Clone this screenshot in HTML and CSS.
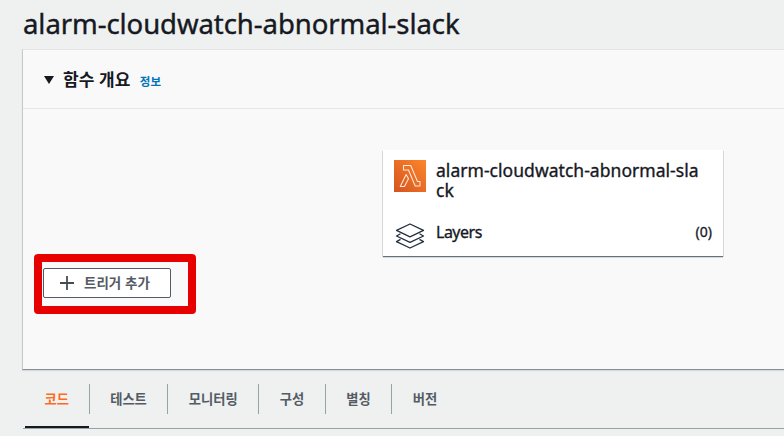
FILE: index.html
```
<!DOCTYPE html>
<html lang="ko">
<head>
<meta charset="utf-8">
<title>alarm-cloudwatch-abnormal-slack</title>
<link rel="stylesheet" href="styles.css">
</head>
<body>
<h1 class="title">alarm-cloudwatch-abnormal-slack</h1>
<section class="panel">
  <header class="panel-head">
    <svg class="caret" width="10" height="8" viewBox="0 0 10 8"><path d="M0 0h10L5 8z" fill="#16191f"/></svg>
    <h2>함수 개요</h2>
    <a class="info">정보</a>
  </header>
  <div class="panel-body">
    <div class="card">
      <div class="row name-row">
        <svg class="lambda" width="32" height="32" viewBox="0 0 32 32">
          <defs><linearGradient id="g" x1="0" y1="1" x2="1" y2="0"><stop offset="0" stop-color="#d6531f"/><stop offset="1" stop-color="#fc862b"/></linearGradient></defs>
          <path d="M0 0h32v32H0z" fill="url(#g)"/>
          <path d="M9.500 5.500h7.200l6.800 16h2.500v4.500h-4.800L14.500 10H9.500zM12.100 14.500l2.400 4.300-4.100 7.700H6.300z" fill="none" stroke="#ffe9d9" stroke-width="1.050" stroke-linejoin="round"/>
        </svg>
        <div class="name"><div>alarm-cloudwatch-abnormal-sla</div><div>ck</div></div>
      </div>
      <div class="row layers-row">
        <svg class="stack" width="30" height="26" viewBox="0 0 30 26" fill="none" stroke="#232f3e" stroke-width="1.300" stroke-linejoin="round">
          <path d="M15 1l13.500 6.400L15 13.800 1.500 7.400z"/>
          <path d="M5.500 10.800L1.500 13 15 19.400 28.500 13l-4-2.200M5.500 16.400L1.500 18.600 15 25 28.500 18.600l-4-2.200"/>
        </svg>
        <span class="layers">Layers</span>
        <span class="count">(0)</span>
      </div>
    </div>
    <div class="highlight">
      <button class="trigger">
        <svg width="14" height="14" viewBox="0 0 14 14"><path d="M7 0v14M0 7h14" stroke="#444d56" stroke-width="1.800"/></svg>
        <span>트리거 추가</span>
      </button>
    </div>
  </div>
</section>
<nav class="tabs">
  <a class="tab active">코드</a><a class="tab">테스트</a><a class="tab">모니터링</a><a class="tab">구성</a><a class="tab">별칭</a><a class="tab">버전</a>
</nav>
</body>
</html>
```

FILE: styles.css
```
* { box-sizing: border-box; }
body {
  margin: 0;
  height: 436px;
  overflow: hidden;
  background: #eff1f1;
  color: #16191f;
  font-family: "Noto Sans", "Noto Sans CJK KR", sans-serif;
}
.title {
  margin: 0;
  height: 49px;
  padding-left: 23px;
  font-size: 27.500px;
  font-weight: 400;
  line-height: 47px;
  letter-spacing: -.07px;
  white-space: nowrap;
  -webkit-text-stroke: .4px;
}
.panel {
  width: 770px;
  height: 321px;
  margin-left: 22px;
  background: #f9f9f9;
  border: 1px solid #e3e5e5;
  border-left-color: #c3caca;
  border-bottom-color: #878f94;
  box-shadow: 0 1px 1px #d5dadb;
}
.panel-head {
  display: flex;
  height: 59px;
  padding-left: 21px;
  border-bottom: 1px solid #e5e7e7;
}
.caret { margin-top: 26px; }
h2 {
  margin: 0 0 0 9px;
  font: 700 17px/57px "Noto Sans CJK KR", sans-serif;
}
.info {
  margin-left: 9.500px;
  color: #0073bb;
  font: 700 11.500px/63px "Noto Sans CJK KR", sans-serif;
}
.panel-body { padding: 41px 0 0 11px; }
.card {
  width: 340px;
  height: 106px;
  margin-left: 349px;
  padding: 10px 11px 0;
  background: #fff;
  box-shadow: 0 1px 1px #687078, 0 1px 1px #a5b0b3;
}
.row { display: flex; }
.name-row { height: 63px; }
.name {
  margin-left: 10px;
  font-size: 17.500px;
  line-height: 20px;
  letter-spacing: .04px;
  white-space: nowrap;
  -webkit-text-stroke: .35px;
}
.stack { margin-left: 1px; }
.layers {
  margin-left: 11px;
  font-size: 16px;
  line-height: 18px;
  letter-spacing: -.5px;
  -webkit-text-stroke: .35px;
}
.count {
  margin-left: auto;
  font-size: 14px;
  line-height: 18px;
  -webkit-text-stroke: .3px;
}
.highlight {
  width: 162px;
  height: 60px;
  margin-top: -2px;
  padding: 6px 1px;
  border: 8px solid #e60000;
  border-radius: 4px;
}
.trigger {
  display: flex;
  align-items: center;
  width: 128px;
  height: 30px;
  padding: 0 0 0 16px;
  background: #fff;
  border: 1px solid #545b64;
  border-radius: 2px;
  color: #545b64;
  font: 700 13.500px/26px "Noto Sans CJK KR", sans-serif;
}
.trigger span { height: 28px; margin-left: 10px; white-space: nowrap; }
.tabs {
  display: flex;
  height: 59px;
  margin: 0 0 0 23px;
  padding: 14px 0 0 2px;
  border-bottom: 1px solid #95a5a6;
}
.tab {
  position: relative;
  height: 30px;
  padding: 0 20.500px;
  border-right: 1px solid #95a5a6;
  color: #545b64;
  font: 700 13.300px/29px "Noto Sans CJK KR", sans-serif;
}
.tab:last-child { border-right: 0; }
.tab.active { padding: 0 19.600px; color: #fc6b21; }
.active::after {
  content: "";
  position: absolute;
  left: 0;
  right: 0;
  bottom: -14px;
  height: 2px;
  background: #16191f;
}
```
